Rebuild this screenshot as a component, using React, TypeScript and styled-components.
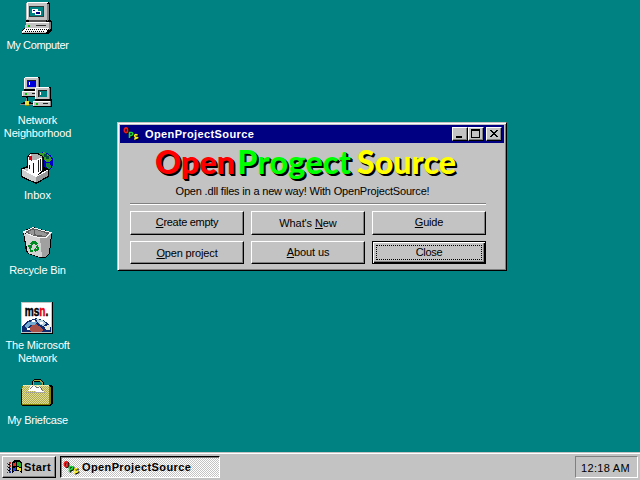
import React from 'react';
import styled, { createGlobalStyle } from 'styled-components';

const teal = '#008282';
const face = '#c3c3c3';

const GlobalStyle = createGlobalStyle`
  * { box-sizing: border-box; }
  body { margin: 0; background: ${teal}; font: 11px "Liberation Sans", Arial, sans-serif; color: #000; }
  button { font: inherit; color: inherit; padding: 0; margin: 0; border-radius: 0; }
`;

const Screen = styled.div`
  width: 640px;
  height: 480px;
  display: flex;
  flex-direction: column;
  overflow: hidden;
  background: ${teal};
`;

const Desktop = styled.main`
  position: relative;
  flex: 1;
`;

const IconColumn = styled.nav`
  width: 74px;
  display: grid;
  grid-auto-rows: 75px;
`;

const Shortcut = styled.div`
  display: flex;
  flex-direction: column;
  align-items: center;
  gap: 3px;
`;

const IconArt = styled.svg`
  width: 36px;
  height: 36px;
  flex: none;
  shape-rendering: crispEdges;
`;

const Label = styled.span<{ $track?: number }>`
  font-size: 11px;
  line-height: 13px;
  text-align: center;
  white-space: pre;
  letter-spacing: ${(p) => p.$track ?? 0}px;
`;

const ShortcutLabel = styled(Label)`
  color: #fff;
  padding-left: 1px;
`;

const Window = styled.section`
  position: absolute;
  left: 117px;
  top: 122px;
  width: 390px;
  height: 149px;
  padding: 1px;
  background: ${face};
  border: 1px solid;
  border-color: ${face} #000 #000 ${face};
  box-shadow: inset 1px 1px #fff, inset -1px -1px #808080;
`;

const TitleBar = styled.header`
  height: 18px;
  margin: 1px;
  padding: 0 2px 0 3px;
  display: flex;
  align-items: center;
  background: #000082;
  color: #fff;
`;

const BoldLabel = styled(Label)`
  font-weight: bold;
  text-align: left;
`;

const TitleText = styled(BoldLabel)`
  flex: 1;
  padding: 1px 0 0 5px;
`;

const SmallArt = styled.svg`
  width: 17px;
  height: 16px;
  flex: none;
`;

const CaptionButton = styled.button<{ $gap?: number }>`
  width: 16px;
  height: 14px;
  margin-left: ${(p) => p.$gap ?? 0}px;
  background: ${face};
  border: 1px solid;
  border-color: #fff #000 #000 #fff;
  box-shadow: inset -1px -1px #808080;
  display: flex;

  svg { width: 14px; height: 12px; shape-rendering: crispEdges; }
`;

const Content = styled.div`
  padding: 0 17px 0 11px;
  display: flex;
  flex-direction: column;
`;

const Banner = styled.svg`
  width: 320px;
  height: 41px;
  margin-left: 14px;
  overflow: visible;
  font: 900 32px Lato, "Open Sans", sans-serif;
  text-shadow: 1px 1px #000, 2px 2px #000;
`;

const Tagline = styled(Label)`
  width: 345px;
  height: 18px;
`;

const Divider = styled.div`
  width: 356px;
  height: 2px;
  border-top: 1px solid #808080;
  border-bottom: 1px solid #fff;
`;

const ButtonGrid = styled.div`
  margin-top: 6px;
  display: grid;
  grid-template: 24px 23px / repeat(3, 114px);
  gap: 6px 7px;
`;

const PushButton = styled.button<{ $focused?: boolean; $drop?: number }>`
  display: flex;
  align-items: center;
  justify-content: center;
  background: ${face};
  border: 1px solid;
  border-color: ${(p) => (p.$focused ? '#000' : '#fff #000 #000 #fff')};
  box-shadow: ${(p) =>
    p.$focused ? 'inset 1px 1px #fff, inset -1px -1px #000, inset -2px -2px #808080' : 'inset -1px -1px #808080'};
  outline: ${(p) => (p.$focused ? '1px dotted #000' : 'none')};
  outline-offset: -5px;

  ${Label} { margin-top: ${(p) => p.$drop ?? 0}px; }
`;

const Key = styled.u`
  text-decoration-thickness: 1px;
  text-underline-offset: 1px;
`;

const Taskbar = styled.footer`
  height: 28px;
  padding: 2px 2px 2px;
  display: flex;
  align-items: flex-start;
  background: ${face};
  border-top: 1px solid ${face};
  box-shadow: inset 0 1px #fff;
`;

const StartButton = styled.button`
  width: 54px;
  height: 22px;
  margin-top: 1px;
  padding-left: 3px;
  display: flex;
  align-items: center;
  gap: 1px;
  background: ${face};
  border: 1px solid;
  border-color: #fff #000 #000 #fff;
  box-shadow: inset -1px -1px #808080;
`;

const TaskButton = styled.button`
  width: 160px;
  height: 22px;
  margin: 1px 0 0 4px;
  padding: 1px 0 0 2px;
  display: flex;
  align-items: center;
  gap: 2px;
  background: repeating-conic-gradient(#fff 0 25%, ${face} 0 50%) 0 0 / 2px 2px;
  border: 1px solid;
  border-color: #000 #fff #fff #000;
  box-shadow: inset 1px 1px #808080;
`;

const Tray = styled.div`
  width: 63px;
  height: 22px;
  margin: 1px 0 0 auto;
  padding: 2px 2px 0 0;
  display: flex;
  align-items: center;
  justify-content: center;
  border: 1px solid;
  border-color: #808080 #fff #fff #808080;
`;

const ComputerIcon = () => (
  <IconArt viewBox="57 0 108 108">
    <path d="M81 6H144L150 12V57L156 66V90L144 102H66V93L78 78V9Z" fill="#000" />
    <path d="M78 9H141V60H78Z" fill="#c3c3c3" />
    <path d="M81 6H144V9H84V57H81Z" fill="#fff" />
    <path d="M141 12H147V57L141 63Z" fill="#828282" />
    <path d="M87 18H132V51H87Z" fill="#303838" />
    <path d="M90 21H129V48H90Z" fill={teal} />
    <path d="M96 27H114V39H96Z" fill="#fff" />
    <path d="M99 30H105V33H99Z" fill="#0000a0" />
    <path d="M105 33H123V45H105Z" fill="#fff" />
    <path d="M108 36H120V42H108Z" fill="#000082" />
    <path d="M87 60H138V66H87Z" fill="#505050" />
    <path d="M78 66H150V84H75Z" fill="#c3c3c3" />
    <path d="M78 66H147V69H78Z" fill="#fff" />
    <path d="M147 66H153V84L147 90Z" fill="#828282" />
    <path d="M84 75H90V81H84Z" fill="#00c300" />
    <path d="M108 75H138V78H108Z" fill="#303030" />
    <path d="M78 84H147L138 99H66V93Z" fill="#fff" />
    <path d="M78 88.5H141M75 94.5H135" stroke="#000" strokeWidth="3" strokeDasharray="3 3" />
    <path d="M69 97.5H138" stroke="#c3c3c3" strokeWidth="3" />
  </IconArt>
);

const PC = ({ screen }: { screen: string }) => (
  <>
    <path d="M9 0H51L54 3V36L57 39V57L54 60H0V45L6 39V3Z" fill="#000" />
    <path d="M9 0H48V36H9Z" fill="#c3c3c3" />
    <path d="M6 3H9V36H6ZM9 0H48V3H9Z" fill="#fff" />
    <path d="M48 3H51V33L48 36Z" fill="#828282" />
    <path d="M15 9H42V30H15Z" fill="#202020" />
    <path d="M17 11H42V30H17Z" fill={screen} />
    <path d="M21 14H24V23H21Z" fill="#fff" />
    <path d="M0 42H51V57H0Z" fill="#c3c3c3" />
    <path d="M0 42H51V45H0ZM0 42H3V57H0Z" fill="#fff" />
    <path d="M51 42H54V54L51 57Z" fill="#828282" />
    <path d="M9 48H15V54H9Z" fill="#00c300" />
    <path d="M30 49H45V52H30Z" fill="#202020" />
  </>
);

const NetworkIcon = () => (
  <IconArt viewBox="57 15 108 108">
    <g transform="translate(66 21)"><PC screen="#0000d8" /></g>
    <path d="M62 101H72V98H90V101H105M80 81V98" stroke="#000" strokeWidth="7" fill="none" />
    <path d="M60 102H105M80 84V99" stroke="#828282" strokeWidth="3" />
    <path d="M75 93H87V105H75Z" fill="#e8e040" />
    <path d="M75 105H87V108H75Z" fill="#828200" />
    <g transform="translate(99 51)"><PC screen={teal} /></g>
  </IconArt>
);

const InboxIcon = () => (
  <IconArt viewBox="57 15 108 108">
    <circle cx="130" cy="52" r="30" fill="#0000c8" />
    <path d="M114 24L134 22L150 33L156 45L148 52L135 49L132 39L120 36Z" fill="#38a028" />
    <path d="M138 55H150L153 66L141 78Z" fill="#188838" />
    <path d="M132 28H141V34H147V42H138V36H132Z" fill="#005040" />
    <path d="M63 69L81 63V33L93 24H114L132 36V66L147 72V96L108 117L63 96Z" fill="#000" />
    <path d="M66 72L84 69V90L108 96L138 76L144 75V93L108 111L66 93Z" fill="#c3c3c3" />
    <path d="M84 39L90 27L111 27L126 36V75L108 96L84 84Z" fill="#fff" />
    <path d="M92 27H111L129 36L110 44H96Z" fill="#b0b0b0" />
    <path d="M114 45V81M120 42V78M126 39V74" stroke="#202020" strokeWidth="3" />
    <path d="M87 60V72M100 54V84" stroke="#000090" strokeWidth="3" />
    <path d="M87 33H96V48L91 44L87 46Z" fill="#d80010" />
    <path d="M66 72L108 96L144 76V93L108 113L66 93Z" fill="#d0d0d0" />
    <path d="M108 96L144 76V93L108 113Z" fill="#989898" />
    <path d="M66 72L108 95L144 75" stroke="#fff" strokeWidth="3" fill="none" />
  </IconArt>
);

const RecycleIcon = () => (
  <IconArt viewBox="57 15 108 108">
    <path d="M69 36L81 27L99 21L153 36L156 45L150 99L138 114H120L84 102L78 96Z" fill="#000" />
    <path d="M72 36L99 24L153 39L138 54H120L99 48Z" fill="#606060" />
    <path d="M84 36L102 28V47ZM105 29L144 42L135 48L105 43Z" fill="#989898" />
    <path d="M72 39L99 50L120 54L129 111H117L84 99Z" fill="#d4d4d4" />
    <path d="M120 54H138L153 42L147 99L135 111H126Z" fill="#a0a0a0" />
    <path d="M70 36L99 23L153 38L138 53H120L99 48Z" fill="none" stroke="#f5f5f5" strokeWidth="3" />
    <path d="M90 70L96 63H108L113 70L108 76L102 69L95 77ZM84 76L94 74L97 83L91 83L95 90L87 87ZM112 75L119 88L108 94V98L101 91L108 84V88L112 86L107 79Z" fill="#008a22" />
    <path d="M88 89L98 91V96L91 95Z" fill="#008a22" />
  </IconArt>
);

const MsnIcon = () => (
  <IconArt viewBox="57 15 108 108">
    <path d="M63 21H159V117H63Z" fill="#000" />
    <path d="M63 21H156V114H63Z" fill="#c3c3c3" />
    <path d="M66 24H153V111H66Z" fill="#fff" />
    <path d="M66 111V96L75 84L90 75L108 70L129 75L147 87L153 99V111Z" fill="#102c70" />
    <path d="M72 93L87 81L105 75L111 84L102 90L90 90L81 99Z" fill="#73aad2" />
    <path d="M93 93L108 87L117 93L129 105L126 111H93L87 102Z" fill="#a85048" />
    <path d="M108 72L126 75L138 87L129 93L117 87Z" fill="#b8d4df" />
    <path d="M132 93L150 90V105H138Z" fill="#e8e8d8" />
    <path d="M96 75H105V81H96ZM120 81H129V87H120ZM81 99H90V105H81Z" fill="#fff" />
    <text x="74" y="62" textLength="71" lengthAdjust="spacingAndGlyphs" fontFamily="Liberation Sans" fontWeight="bold" fontSize="42" stroke="#000" strokeWidth="1.5">
      ms<tspan fill="#e80010" stroke="#e80010">n</tspan>.
    </text>
  </IconArt>
);

const BriefcaseIcon = () => (
  <IconArt viewBox="57 9 108 108">
    <defs>
      <pattern id="weave" width="6" height="6" patternUnits="userSpaceOnUse">
        <path d="M0 0H6V6H0Z" fill="#b0ad4c" />
        <path d="M0 0H3V3H0ZM3 3H6V6H3Z" fill="#dedb98" />
      </pattern>
    </defs>
    <path d="M99 42V30L105 25H120L128 31V42" fill="none" stroke="#000" strokeWidth="7" />
    <path d="M99 42V30L105 25H120L126 31V40" fill="none" stroke="#a8a440" strokeWidth="3" />
    <path d="M69 39H153L159 45V93L150 102H66L63 96V57Z" fill="#000" />
    <path d="M66 42H150L153 48V93L147 99H66Z" fill="#828200" />
    <path d="M69 39H147V96H66V57Z" fill="url(#weave)" />
    <path d="M84 57L93 39H103L108 45L114 42L128 54L132 60Z" fill="#fff" />
    <path d="M91 51L102 39L111 49L118 44L130 57" stroke="#303030" strokeWidth="2" fill="none" />
    <path d="M75 61.5H138" stroke="#a6a6a6" strokeWidth="3" />
    <path d="M69 39H147" stroke="#ffffc8" strokeWidth="2" />
  </IconArt>
);

const OpsIcon = () => (
  <SmallArt viewBox="0 0 17 16" fill="none">
    <g stroke="#000" strokeWidth="1.8" transform="translate(1 .6)">
      <ellipse cx="3" cy="4.2" rx="1.6" ry="2.4" />
      <path d="M6.5 12V6.5H8.3Q10 6.7 9.8 8T8 9.5H6.8" />
      <path d="M14.6 9Q11.4 8 11.6 9.8T14 11.5T11.2 13.2" />
    </g>
    <ellipse cx="3" cy="4.2" rx="1.6" ry="2.4" stroke="#f01818" strokeWidth="1.7" />
    <path d="M6.5 12V6.5H8.3Q10 6.7 9.8 8T8 9.5H6.8" stroke="#20d840" strokeWidth="1.6" />
    <path d="M14.6 9Q11.4 8 11.6 9.8T14 11.5T11.2 13.2" stroke="#f8f020" strokeWidth="1.6" />
  </SmallArt>
);

const FlagIcon = () => (
  <SmallArt viewBox="0 0 17 16" shapeRendering="crispEdges">
    <path d="M6 3L9 1H13L16 3V14L13 12H9L6 14Z" fill="#000" />
    <path d="M7 4L10 3V7H7Z" fill="#e83020" />
    <path d="M11 3H13L15 4V8L11 7Z" fill="#28b028" />
    <path d="M7 9L10 8V11L7 12Z" fill="#2048e0" />
    <path d="M11 8L15 9V12L11 11Z" fill="#f0e020" />
    <path d="M1 4H2V5H1ZM3 3H5V5H3ZM1 7H2V8H1ZM3 6H5V8H3Z" fill="#c02020" />
    <path d="M1 10H2V11H1ZM3 9H5V11H3ZM1 13H2V14H1ZM3 12H5V14H3Z" fill="#2030a0" />
    <path d="M2 5H4V6H2ZM2 8H4V9H2ZM2 11H4V12H2Z" fill="#000" />
  </SmallArt>
);

const words = [
  { text: 'Open', x: 11, width: 80, color: '#ff0000' },
  { text: 'Progect', x: 93, width: 114, color: '#00ff00' },
  { text: 'Source', x: 213, width: 99, color: '#ffff00' },
];

const shortcuts = [
  { name: 'My Computer', art: <ComputerIcon />, track: -0.35 },
  { name: 'Network\nNeighborhood', art: <NetworkIcon />, track: -0.15 },
  { name: 'Inbox', art: <InboxIcon />, track: 0 },
  { name: 'Recycle Bin', art: <RecycleIcon />, track: -0.15 },
  { name: 'The Microsoft\nNetwork', art: <MsnIcon />, track: -0.2 },
  { name: 'My Briefcase', art: <BriefcaseIcon />, track: -0.25 },
];

const actions = [
  { before: '', key: 'C', after: 'reate empty', track: -0.3, drop: -2 },
  { before: "What's ", key: 'N', after: 'ew', track: -0.1, drop: 0 },
  { before: '', key: 'G', after: 'uide', track: -0.2, drop: -2 },
  { before: '', key: 'O', after: 'pen project', track: -0.15, drop: 2 },
  { before: '', key: 'A', after: 'bout us', track: -0.1, drop: 0 },
  { before: 'Close', key: '', after: '', track: -0.3, drop: 0, focused: true },
];

export default function App() {
  return (
    <Screen>
      <GlobalStyle />
      <Desktop>
        <IconColumn>
          {shortcuts.map((s) => (
            <Shortcut key={s.name}>
              {s.art}
              <ShortcutLabel $track={s.track}>{s.name}</ShortcutLabel>
            </Shortcut>
          ))}
        </IconColumn>
        <Window>
          <TitleBar>
            <OpsIcon />
            <TitleText $track={0.38}>OpenProjectSource</TitleText>
            <CaptionButton aria-label="Minimize">
              <svg viewBox="0 0 14 12"><path d="M3 8H9V10H3Z" /></svg>
            </CaptionButton>
            <CaptionButton aria-label="Maximize">
              <svg viewBox="0 0 14 12"><path d="M2 1H11V10H2ZM3 3V9H10V3Z" fillRule="evenodd" /></svg>
            </CaptionButton>
            <CaptionButton aria-label="Close window" $gap={2}>
              <svg viewBox="0 0 14 12"><path d="M3 2H5V3H6V4H8V3H9V2H11V3H10V4H9V5H8V6H9V7H10V8H11V9H9V8H8V7H6V8H5V9H3V8H4V7H5V6H6V5H5V4H4V3H3Z" /></svg>
            </CaptionButton>
          </TitleBar>
          <Content>
            <Banner viewBox="0 0 320 41">
              {words.map((w) => (
                <text key={w.text} x={w.x} y="30" textLength={w.width} lengthAdjust="spacingAndGlyphs" fill={w.color}>
                  {w.text}
                </text>
              ))}
            </Banner>
            <Tagline $track={-0.18}>Open .dll files in a new way! With OpenProjectSource!</Tagline>
            <Divider />
            <ButtonGrid>
              {actions.map((a) => (
                <PushButton key={a.before + a.key} $focused={a.focused} $drop={a.drop}>
                  <Label $track={a.track}>{a.before}{a.key && <Key>{a.key}</Key>}{a.after}</Label>
                </PushButton>
              ))}
            </ButtonGrid>
          </Content>
        </Window>
      </Desktop>
      <Taskbar>
        <StartButton><FlagIcon /><BoldLabel $track={0.4}>Start</BoldLabel></StartButton>
        <TaskButton><OpsIcon /><BoldLabel $track={0.38}>OpenProjectSource</BoldLabel></TaskButton>
        <Tray><Label $track={0.3}>12:18 AM</Label></Tray>
      </Taskbar>
    </Screen>
  );
}
